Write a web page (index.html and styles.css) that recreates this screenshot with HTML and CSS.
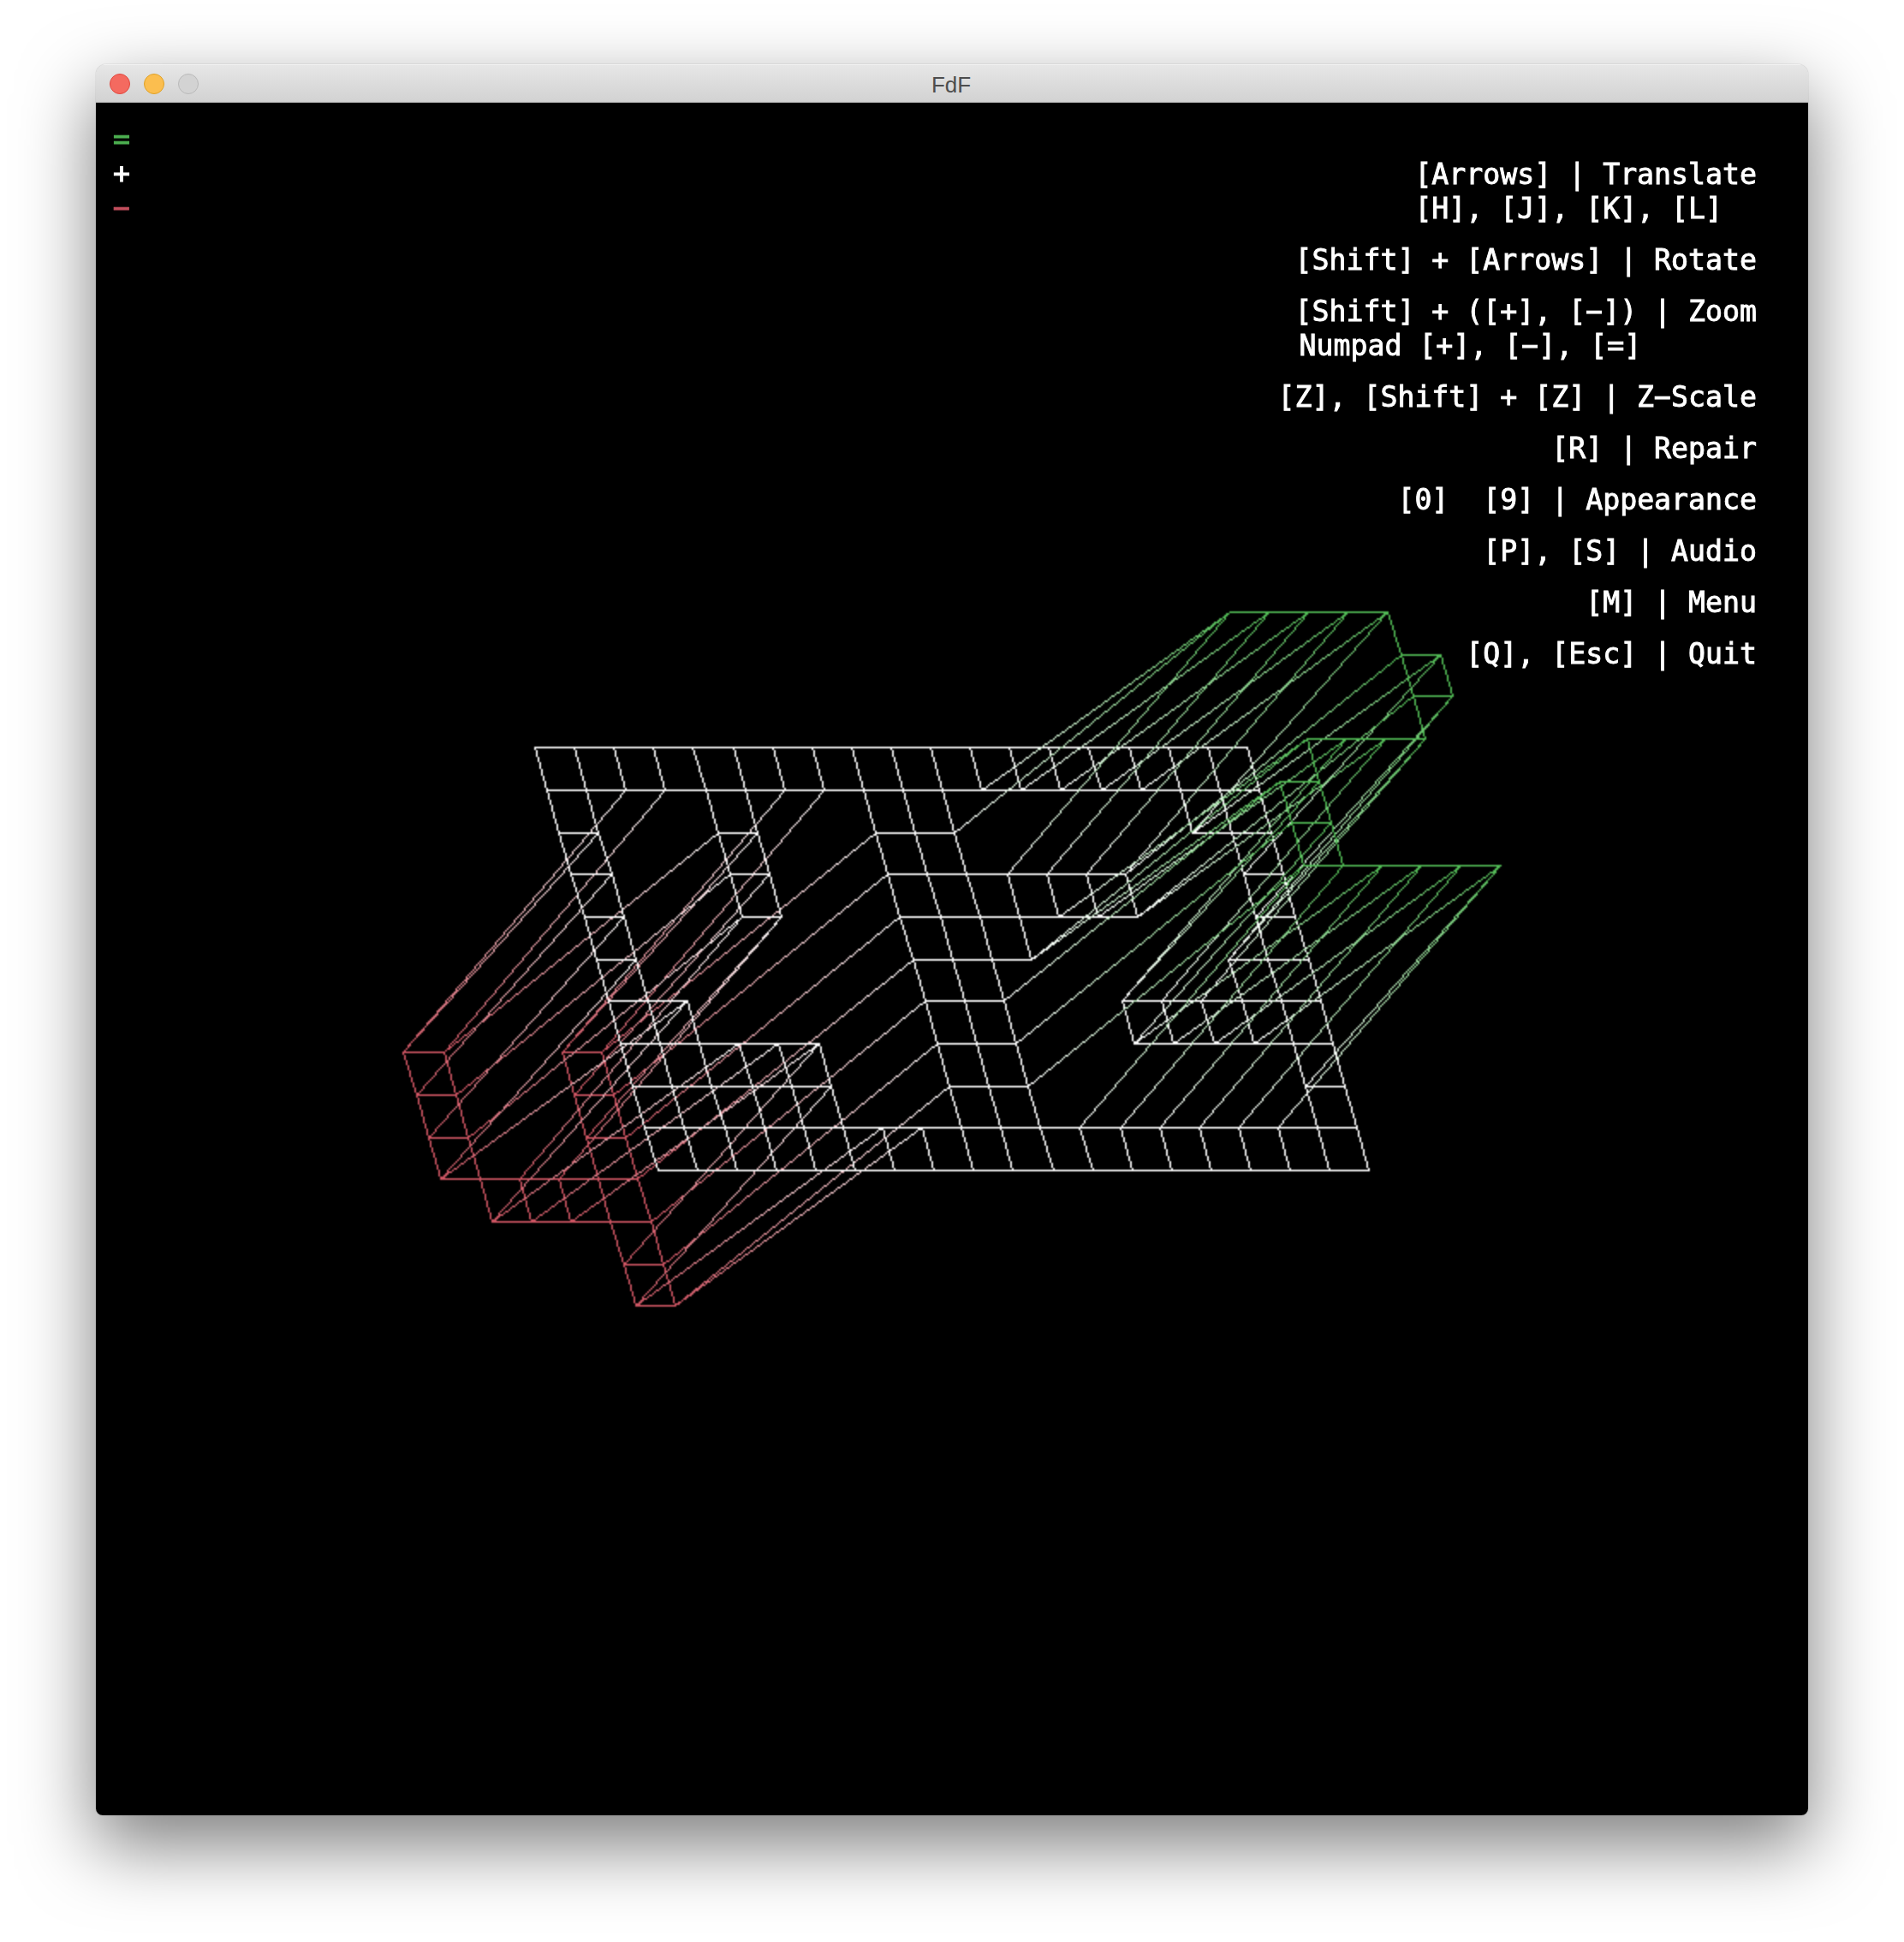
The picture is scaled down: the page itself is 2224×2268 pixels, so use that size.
FILE: index.html
```html
<!DOCTYPE html>
<html lang="en">
<head>
<meta charset="utf-8">
<title>FdF</title>
<link rel="stylesheet" href="styles.css">
</head>
<body>
<main class="window">
  <header class="titlebar">
    <div class="lights">
      <span class="light light-close"></span>
      <span class="light light-min"></span>
      <span class="light light-zoom"></span>
    </div>
    <h1 class="title">FdF</h1>
  </header>
  <section class="canvas">
    <canvas class="wire" id="wire" width="1000" height="1000"></canvas>
    <ul class="legend">
      <li class="legend-high">=</li>
      <li class="legend-zero">+</li>
      <li class="legend-low">−</li>
    </ul>
    <div class="menu">
      <p>[Arrows] | Translate<br>[H], [J], [K], [L]</p>
      <p>[Shift] + [Arrows] | Rotate</p>
      <p>[Shift] + ([+], [−]) | Zoom<br><span class="nudge">Numpad [+], [−], [=]</span></p>
      <p>[Z], [Shift] + [Z] | Z−Scale</p>
      <p>[R] | Repair</p>
      <p>[0]  [9] | Appearance</p>
      <p>[P], [S] | Audio</p>
      <p>[M] | Menu</p>
      <p>[Q], [Esc] | Quit</p>
    </div>
  </section>
</main>
<script src="wire.js"></script>
</body>
</html>
```
FILE: styles.css
```css
* { box-sizing: border-box; }
html, body { margin: 0; padding: 0; background: #fff; }
body { width: 2224px; height: 2268px; padding: 75px 112px 0; overflow: hidden; }

.window {
  width: 2000px;
  height: 2045px;
  border-radius: 12px 12px 8px 8px;
  box-shadow: 0 0 1px rgba(0, 0, 0, 0.45), 0 34px 85px 2px rgba(0, 0, 0, 0.5);
  overflow: hidden;
  display: flex;
  flex-direction: column;
}

.titlebar {
  flex: 0 0 45px;
  position: relative;
  display: flex;
  align-items: center;
  justify-content: center;
  padding: 3px 2px 0 0;
  background: linear-gradient(#e7e7e7, #d2d2d2);
  border-bottom: 1px solid #b1b1b1;
  box-shadow: inset 0 1px 0 #f2f2f2;
}
.lights {
  position: absolute;
  left: 16px;
  top: 11px;
  display: flex;
  gap: 16px;
}
.light {
  width: 24px;
  height: 24px;
  border-radius: 50%;
  border: 1px solid;
}
.light-close { background: #f46a60; border-color: #e0483f; }
.light-min { background: #fbbe4f; border-color: #dfa127; }
.light-zoom { background: #d3d3d3; border-color: #b9b9b9; }
.title {
  margin: 0;
  font: 400 26px/1 "Liberation Sans", Arial, sans-serif;
  color: #4d4d4d;
}

.canvas {
  flex: 1;
  position: relative;
  background: #000;
  display: flex;
  justify-content: space-between;
  align-items: flex-start;
  padding: 24px 60px 0 20px;
  font: 400 33.2px/40px "DejaVu Sans Mono", "Liberation Mono", monospace;
  color: #fff;
}
.wire { position: absolute; left: 0; top: 0; width: 2000px; height: 2000px; }
.legend {
  position: relative;
  top: -1px;
  list-style: none;
  margin: 0;
  padding: 0;
  -webkit-text-stroke: 1px currentColor;
  filter: blur(0.5px);
}
.legend-high { color: #4caf50; }
.legend-zero { color: #fff; }
.legend-low { color: #c5505e; }
.menu {
  position: relative;
  display: flex;
  flex-direction: column;
  align-items: flex-end;
  padding-top: 40px;
  gap: 20px;
  -webkit-text-stroke: 0.9px #fff;
  filter: blur(0.5px);
}
.menu p { margin: 0; white-space: pre; }
.nudge { padding-left: 5px; }
```
FILE: wire.js
```js
// The FdF map: "-" is sunk, "+" is raised, "0" is the plane.
var MAP = [
  "0 0 0 0 0 0 0 0 0 0 0 0 0 0 0 0 0 0 0",
  "0 0 0 0 0 0 0 0 0 0 0 0 0 0 0 0 0 0 0",
  "0 0 - - 0 0 - - 0 0 0 + + + + + 0 0 0",
  "0 0 - - 0 0 - - 0 0 0 0 0 0 0 + + 0 0",
  "0 0 - - 0 0 - - 0 0 0 0 0 0 0 + + 0 0",
  "0 0 - - - - - - 0 0 0 0 + + + + 0 0 0",
  "0 0 0 - - - - - 0 0 0 + + 0 0 0 0 0 0",
  "0 0 0 0 0 0 - - 0 0 0 + + 0 0 0 0 0 0",
  "0 0 0 0 0 0 - - 0 0 0 + + + + + + 0 0",
  "0 0 0 0 0 0 0 0 0 0 0 0 0 0 0 0 0 0 0",
  "0 0 0 0 0 0 0 0 0 0 0 0 0 0 0 0 0 0 0"
].map(function (r) { return r.split(" "); });

// Projection in image pixels (the 1000x1000 image is shown at 2x).
var ORIGIN = [256.0, 376.4], COL = 23.1, ROW = [7.15, 24.67];
var LIFT = { "+": [137.6, -128.6], "-": [-137.1, 128.6], "0": [0, 0] };
var COLORS = { "+": [80, 185, 84], "0": [255, 255, 255], "-": [205, 84, 98] };

var ctx = document.getElementById("wire").getContext("2d");

function point(r, c) {
  var lift = LIFT[MAP[r][c]];
  return [
    Math.round(ORIGIN[0] + c * COL + r * ROW[0] + lift[0]),
    Math.round(ORIGIN[1] + r * ROW[1] + lift[1])
  ];
}

function edge(r1, c1, r2, c2) {
  var a = point(r1, c1), b = point(r2, c2);
  var ca = COLORS[MAP[r1][c1]], cb = COLORS[MAP[r2][c2]];
  var dx = b[0] - a[0], dy = b[1] - a[1];
  var n = Math.max(Math.abs(dx), Math.abs(dy));
  for (var i = 0; i <= n; i++) {
    var t = n ? i / n : 0;
    ctx.fillStyle = "rgb(" +
      Math.round(ca[0] + (cb[0] - ca[0]) * t) + "," +
      Math.round(ca[1] + (cb[1] - ca[1]) * t) + "," +
      Math.round(ca[2] + (cb[2] - ca[2]) * t) + ")";
    ctx.fillRect(Math.round(a[0] + dx * t), Math.round(a[1] + dy * t), 1, 1);
  }
}

MAP.forEach(function (row, r) {
  row.forEach(function (_, c) {
    if (c + 1 < row.length) edge(r, c, r, c + 1);
    if (r + 1 < MAP.length) edge(r, c, r + 1, c);
  });
});
```
